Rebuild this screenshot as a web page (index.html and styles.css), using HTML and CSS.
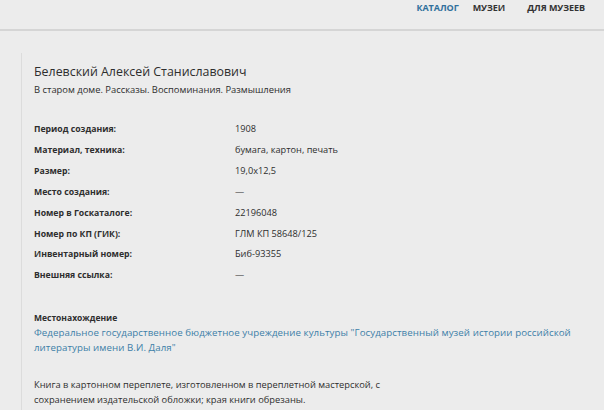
FILE: index.html
```html
<!DOCTYPE html>
<html lang="ru">
<head>
<meta charset="utf-8">
<link rel="stylesheet" href="styles.css">
</head>
<body>
<header class="top">
  <nav class="nav">
    <a class="nav-item active">КАТАЛОГ</a>
    <a class="nav-item">МУЗЕИ</a>
    <a class="nav-item">ДЛЯ МУЗЕЕВ</a>
  </nav>
</header>
<main class="main">
  <article class="card">
    <h1 class="title">Белевский Алексей Станиславович</h1>
    <p class="subtitle">В старом доме. Рассказы. Воспоминания. Размышления</p>
    <dl class="props">
      <dt>Период создания:</dt><dd>1908</dd>
      <dt>Материал, техника:</dt><dd>бумага, картон, печать</dd>
      <dt>Размер:</dt><dd>19,0x12,5</dd>
      <dt>Место создания:</dt><dd>—</dd>
      <dt>Номер в Госкаталоге:</dt><dd>22196048</dd>
      <dt>Номер по КП (ГИК):</dt><dd>ГЛМ КП 58648/125</dd>
      <dt>Инвентарный номер:</dt><dd>Биб-93355</dd>
      <dt>Внешняя ссылка:</dt><dd>—</dd>
    </dl>
    <section class="location">
      <h2 class="loc-title">Местонахождение</h2>
      <a class="loc-link">Федеральное государственное бюджетное учреждение культуры "Государственный музей истории российской литературы имени В.И. Даля"</a>
    </section>
    <p class="desc">Книга в картонном переплете, изготовленном в переплетной мастерской, с<br>сохранением издательской обложки; края книги обрезаны.</p>
  </article>
</main>
</body>
</html>
```
FILE: styles.css
```css
* { box-sizing: border-box; }
html, body { margin: 0; padding: 0; }
body {
  background: #ececec;
  font-family: "Open Sans", "Noto Sans", "DejaVu Sans", sans-serif;
  color: #2e2e2e;
  overflow: hidden;
  height: 410px;
}
.top {
  height: 31px;
  border-bottom: 2px solid #d5d5d5;
  display: flex;
  justify-content: flex-end;
  align-items: flex-start;
}
.nav {
  display: flex;
  padding: 1px 19px 0 0;
}
.nav-item {
  font-size: 9px;
  font-weight: 700;
  color: #333;
  letter-spacing: -0.05px;
}
.nav-item + .nav-item { margin-left: 14px; }
.nav-item:last-child { margin-left: 22px; }
.nav-item.active { color: #31709c; }
.main {
  padding: 22px 0 0 21px;
}
.card {
  border-left: 1px solid #dcdcdc;
  padding: 10px 0 0 12px;
  min-height: 360px;
}
.title {
  margin: 0;
  font-size: 12.4px;
  font-weight: 400;
  line-height: 18px;
}
.subtitle {
  margin: 2px 0 0;
  font-size: 9.4px;
  line-height: 14px;
}
.props {
  margin: 22px 0 0;
  display: grid;
  grid-template-columns: 201px 1fr;
  font-size: 9.2px;
  line-height: 20.9px;
}
.props dt { font-weight: 700; font-size: 8.7px; }
.props dd { margin: 0; }
.location { margin-top: 24px; }
.loc-title {
  margin: 0;
  font-size: 8.5px;
  font-weight: 700;
  line-height: 15px;
}
.loc-link {
  display: block;
  font-size: 9.7px;
  letter-spacing: 0.07px;
  line-height: 15px;
  color: #3d7fa8;
  max-width: 550px;
}
.desc {
  margin: 22px 0 0;
  font-size: 9.3px;
  line-height: 15px;
}
```
